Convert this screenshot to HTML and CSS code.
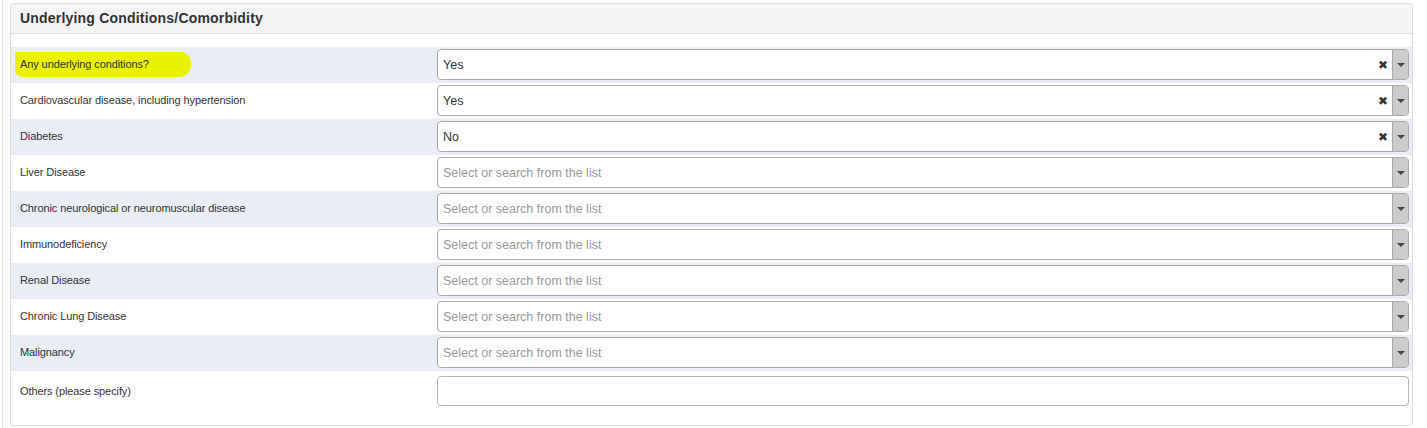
FILE: index.html
```html
<!DOCTYPE html>
<html>
<head>
<meta charset="utf-8">
<link rel="stylesheet" href="styles.css">
</head>
<body>
<div class="page">
  <div class="frame">
    <div class="panel">
      <div class="panel-heading">Underlying Conditions/Comorbidity</div>
      <div class="panel-body">
        <div class="row alt">
          <div class="label"><span class="highlight">Any underlying conditions?</span></div>
          <div class="field"><div class="select"><span class="value">Yes</span><span class="clear">&#x2716;</span><span class="arrow"><i></i></span></div></div>
        </div>
        <div class="row">
          <div class="label">Cardiovascular disease, including hypertension</div>
          <div class="field"><div class="select"><span class="value">Yes</span><span class="clear">&#x2716;</span><span class="arrow"><i></i></span></div></div>
        </div>
        <div class="row alt">
          <div class="label">Diabetes</div>
          <div class="field"><div class="select"><span class="value">No</span><span class="clear">&#x2716;</span><span class="arrow"><i></i></span></div></div>
        </div>
        <div class="row">
          <div class="label">Liver Disease</div>
          <div class="field"><div class="select"><span class="value placeholder">Select or search from the list</span><span class="arrow"><i></i></span></div></div>
        </div>
        <div class="row alt">
          <div class="label">Chronic neurological or neuromuscular disease</div>
          <div class="field"><div class="select"><span class="value placeholder">Select or search from the list</span><span class="arrow"><i></i></span></div></div>
        </div>
        <div class="row">
          <div class="label">Immunodeficiency</div>
          <div class="field"><div class="select"><span class="value placeholder">Select or search from the list</span><span class="arrow"><i></i></span></div></div>
        </div>
        <div class="row alt">
          <div class="label">Renal Disease</div>
          <div class="field"><div class="select"><span class="value placeholder">Select or search from the list</span><span class="arrow"><i></i></span></div></div>
        </div>
        <div class="row">
          <div class="label">Chronic Lung Disease</div>
          <div class="field"><div class="select"><span class="value placeholder">Select or search from the list</span><span class="arrow"><i></i></span></div></div>
        </div>
        <div class="row alt">
          <div class="label">Malignancy</div>
          <div class="field"><div class="select"><span class="value placeholder">Select or search from the list</span><span class="arrow"><i></i></span></div></div>
        </div>
        <div class="row last">
          <div class="label">Others (please specify)</div>
          <div class="field"><div class="textbox"></div></div>
        </div>
      </div>
    </div>
  </div>
</div>
</body>
</html>
```
FILE: styles.css
```css
* { box-sizing: border-box; }
html, body { margin: 0; padding: 0; background: #fff; }
body { font-family: "Liberation Sans", Arial, sans-serif; color: #333; }
.page { padding-left: 2px; height: 428px; }
.frame {
  border-left: 1px solid #e2e2e2;
  height: 428px;
  padding: 3px 14px 0 7px;
}
.panel {
  border: 1px solid #dddddd;
  border-radius: 3px;
  background: #fff;
}
.panel-heading {
  background: #f5f5f5;
  border-bottom: 1px solid #dddddd;
  height: 30px;
  padding: 0 9px 1px 9px;
  display: flex;
  align-items: center;
  font-weight: bold;
  font-size: 14px;
  letter-spacing: 0.2px;
  color: #333;
  border-radius: 3px 3px 0 0;
}
.panel-body { padding: 13px 0 18px 0; }
.row {
  display: flex;
  align-items: center;
  height: 36px;
}
.row.alt { background: #e9eef5; }
.label {
  width: 426px;
  flex: none;
  padding-left: 9px;
  padding-bottom: 2px;
  font-size: 11px;
  letter-spacing: -0.1px;
  color: #333;
}
.row.last .label { padding-bottom: 0; padding-top: 3px; }
.highlight {
  background: #eaf200;
  padding: 6px 42px 7px 5px;
  margin-left: -5px;
  border-radius: 3px 10px 12px 8px;
}
.field { flex: 1; padding-right: 3px; }
.select {
  height: 31px;
  border: 1px solid #aaaaaa;
  border-radius: 4px;
  background: #fff;
  display: flex;
  align-items: center;
  font-size: 12.5px;
  margin-top: -1px;
}
.value { flex: 1; padding-left: 5px; color: #333; }
.value.placeholder { color: #999; }
.clear {
  font-size: 12px;
  font-weight: bold;
  color: #333;
  margin-right: 4px;
  font-family: "DejaVu Sans", sans-serif;
}
.arrow {
  width: 16px;
  height: 100%;
  background: #cccccc;
  border-left: 1px solid #aaaaaa;
  border-radius: 0 3px 3px 0;
  display: flex;
  align-items: center;
  justify-content: center;
}
.arrow i {
  display: block;
  width: 0;
  height: 0;
  border-left: 4px solid transparent;
  border-right: 4px solid transparent;
  border-top: 4px solid #444;
}
.textbox {
  height: 30px;
  border: 1px solid #b5b5b5;
  border-radius: 4px;
  background: #fff;
  margin-top: 3px;
}
```
